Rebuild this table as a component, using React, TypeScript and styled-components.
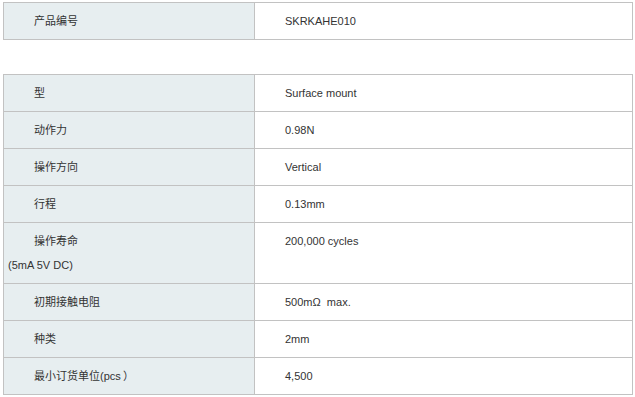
import React from "react";
import styled, { createGlobalStyle } from "styled-components";

const GlobalStyle = createGlobalStyle`
  html, body { margin: 0; padding: 0; background: #ffffff; }
  body {
    font-family: "Liberation Sans", "Noto Sans CJK SC", Arial, sans-serif;
    font-size: 11px;
    color: #333333;
  }
`;

const Page = styled.div`
  width: 635px;
  padding: 2px 0 0 3px;
  box-sizing: border-box;
  display: flex;
  flex-direction: column;
  gap: 34px;
`;

const SpecTable = styled.div`
  display: grid;
  grid-template-columns: 251px 1fr;
  width: 630px;
  box-sizing: border-box;
  border-top: 1px solid #c2c2c2;
  border-left: 1px solid #c2c2c2;
`;

const Cell = styled.div<{ $label?: boolean }>`
  box-sizing: border-box;
  padding: 6px 4px;
  line-height: 24px;
  text-indent: 26px;
  border-right: 1px solid #c2c2c2;
  border-bottom: 1px solid #c2c2c2;
  background: ${(p) => (p.$label ? "#e7eef0" : "#ffffff")};
  color: #333333;
  white-space: pre;
`;

type Row = { label: React.ReactNode; value: string };

const headRows: Row[] = [{ label: "产品编号", value: "SKRKAHE010" }];

const specRows: Row[] = [
  { label: "型", value: "Surface mount" },
  { label: "动作力", value: "0.98N" },
  { label: "操作方向", value: "Vertical" },
  { label: "行程", value: "0.13mm" },
  {
    label: (
      <>
        操作寿命
        <br />
        (5mA 5V DC)
      </>
    ),
    value: "200,000 cycles",
  },
  { label: "初期接触电阻", value: "500mΩ  max." },
  { label: "种类", value: "2mm" },
  { label: "最小订货单位(pcs\u2009）", value: "4,500" },
];

const Table = ({ rows }: { rows: Row[] }) => (
  <SpecTable>
    {rows.map((r, i) => (
      <React.Fragment key={i}>
        <Cell $label>{r.label}</Cell>
        <Cell>{r.value}</Cell>
      </React.Fragment>
    ))}
  </SpecTable>
);

export default function App() {
  return (
    <>
      <GlobalStyle />
      <Page>
        <Table rows={headRows} />
        <Table rows={specRows} />
      </Page>
    </>
  );
}
